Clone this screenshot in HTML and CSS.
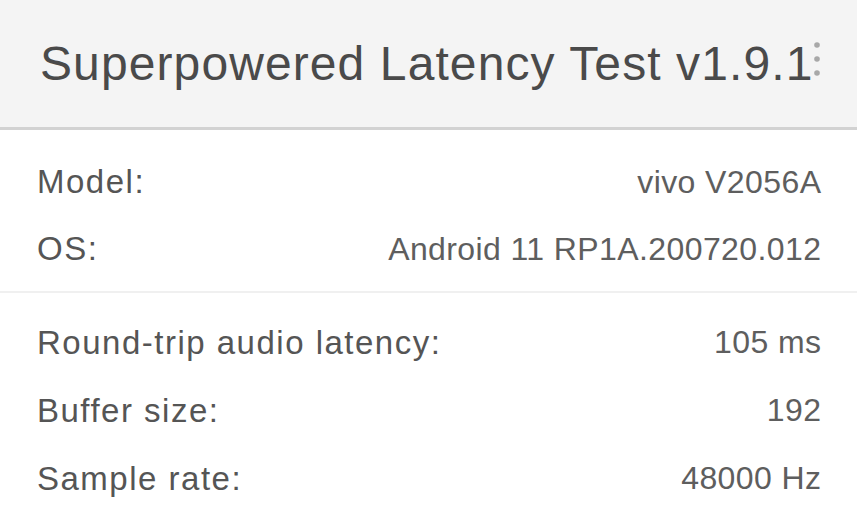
FILE: index.html
```html
<!DOCTYPE html>
<html>
<head>
<meta charset="utf-8">
<link rel="stylesheet" href="styles.css">
</head>
<body>
<header class="bar">
  <h1 class="title">Superpowered Latency Test v1.9.1</h1>
  <svg class="menu" width="8" height="36" viewBox="0 0 8 36"><circle cx="4" cy="4" r="2.8"/><circle cx="4" cy="18" r="2.8"/><circle cx="4" cy="32" r="2.8"/></svg>
</header>
<section class="group first">
  <div class="row"><span class="label">Model:</span><span class="value">vivo V2056A</span></div>
  <div class="row"><span class="label">OS:</span><span class="value">Android 11 RP1A.200720.012</span></div>
</section>
<section class="group second">
  <div class="row"><span class="label">Round-trip audio latency:</span><span class="value">105 ms</span></div>
  <div class="row"><span class="label">Buffer size:</span><span class="value">192</span></div>
  <div class="row"><span class="label">Sample rate:</span><span class="value">48000 Hz</span></div>
</section>
</body>
</html>
```
FILE: styles.css
```css
html, body {
  margin: 0;
  padding: 0;
  background: #ffffff;
  font-family: "Liberation Sans", Arial, sans-serif;
  overflow: hidden;
}
.bar {
  position: relative;
  height: 127px;
  background: #f4f4f4;
  border-bottom: 3px solid #d2d2d2;
  display: flex;
  align-items: center;
  padding-left: 40px;
}
.title {
  margin: 0;
  font-weight: 400;
  font-size: 48px;
  letter-spacing: 1.1px;
  color: #4a4a4a;
  white-space: nowrap;
  line-height: 1;
}
.menu {
  position: absolute;
  left: 813px;
  top: 41px;
  fill: #a8a8a8;
}
.group {
  padding: 0 36px 0 37px;
}
.first {
  padding-top: 18px;
  padding-bottom: 9px;
  border-bottom: 2px solid #f0f0f0;
}
.second {
  padding-top: 15px;
}
.second .row {
  height: 68px;
}
.row {
  height: 67px;
  display: flex;
  justify-content: space-between;
  align-items: center;
  font-size: 32px;
  line-height: 1;
}
.label {
  color: #555555;
  font-size: 33px;
  letter-spacing: 1.5px;
}
.value {
  color: #5e5e5e;
  letter-spacing: 0.4px;
  margin-right: -0.4px;
}
```
